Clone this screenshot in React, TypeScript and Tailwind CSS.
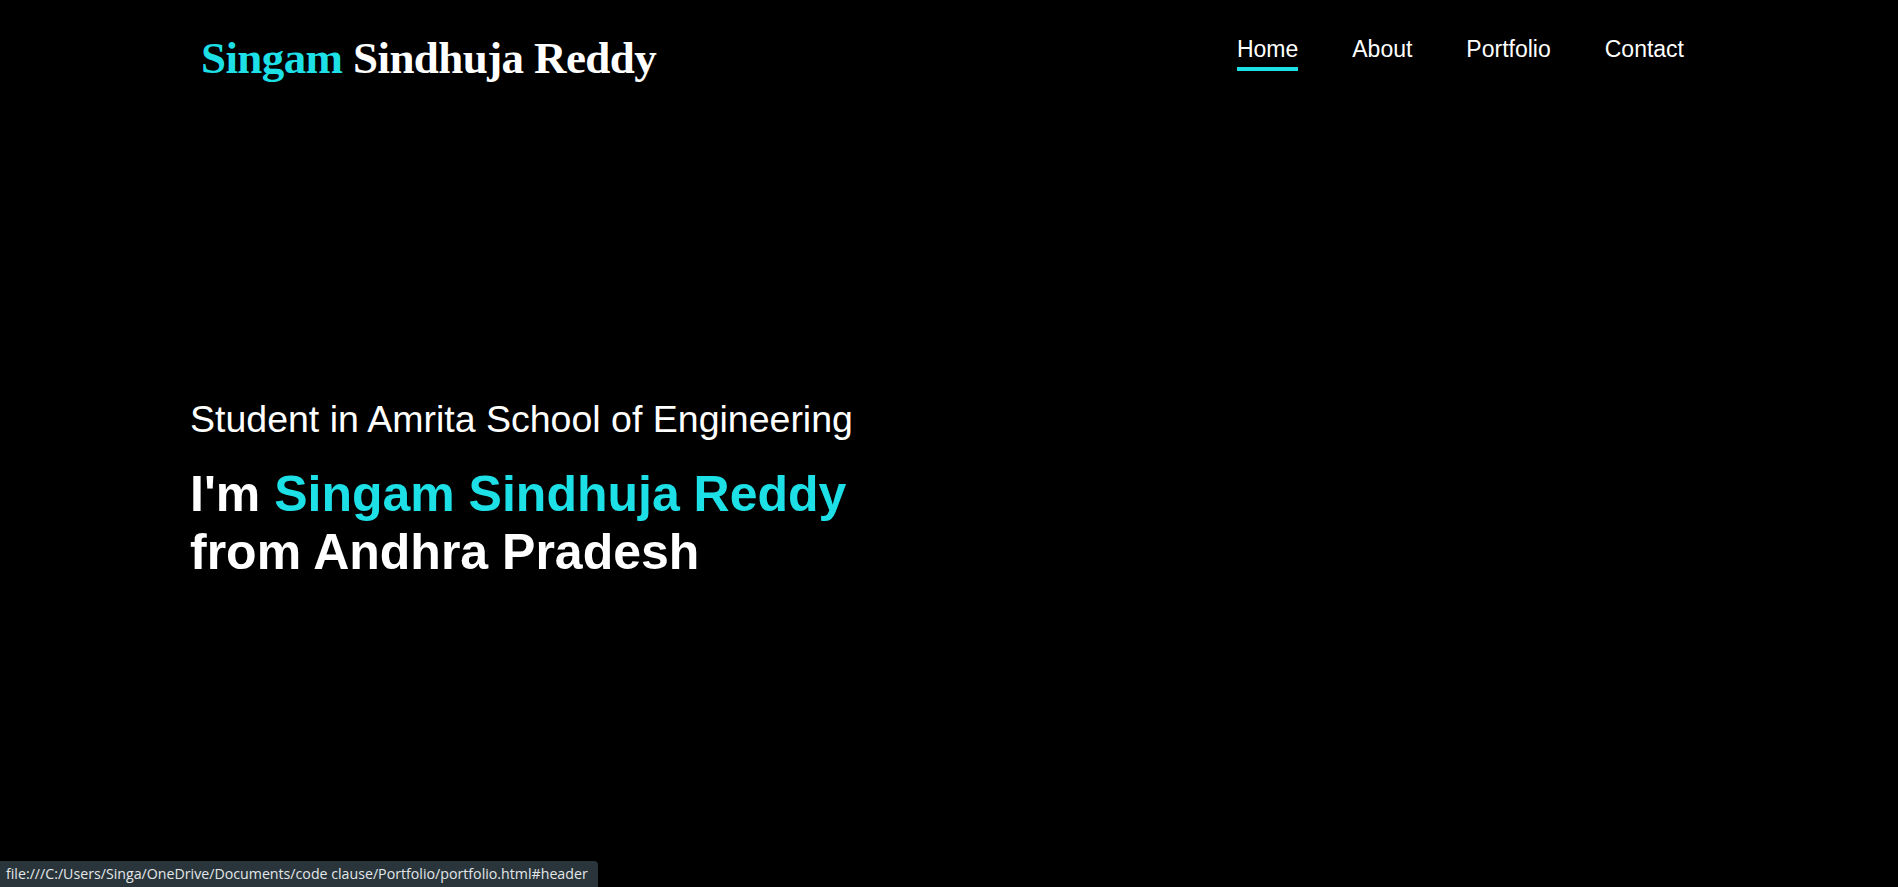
const links = ["Home", "About", "Portfolio", "Contact"];

const App: React.FC = () => {
  return (
    <div className="relative h-[887px] w-full overflow-hidden bg-black text-white">
      <header className="flex h-[100px] items-start justify-between pl-[201px] pr-[214px]">
        <h2 className="mt-[36px] font-['Liberation_Serif',serif] text-[45px] font-bold leading-none tracking-[-0.6px]">
          <span className="text-[#1ddfe6]">Singam</span> Sindhuja Reddy
        </h2>
        <nav className="mt-[37px] flex gap-[54px] font-['Liberation_Sans',Arial,sans-serif] text-[23px]">
          {links.map((l, i) => (
            <a key={l} href="#" className="flex flex-col">
              <span className="leading-[25px]">{l}</span>
              {i === 0 && <span className="mt-[5px] h-1 w-full bg-[#1ddfe6]" />}
            </a>
          ))}
        </nav>
      </header>

      <section className="pl-[190px] pt-[301px] font-['Liberation_Sans',Arial,sans-serif]">
        <p className="text-[37.5px] leading-none">Student in Amrita School of Engineering</p>
        <h1 className="mt-[26px] text-[50px] font-bold leading-[58px]">
          I'm <span className="text-[#1ddfe6]">Singam Sindhuja Reddy</span>
          <br />
          from Andhra Pradesh
        </h1>
      </section>

      <div className="absolute bottom-0 left-0 flex h-[26px] w-[598px] items-center rounded-tr-[4px] bg-[#29353b] pl-[6px] font-['Open_Sans',sans-serif] text-[14.2px] text-[#e3e6e8]">
        file:///C:/Users/Singa/OneDrive/Documents/code clause/Portfolio/portfolio.html#header
      </div>
    </div>
  );
};

export default App;
